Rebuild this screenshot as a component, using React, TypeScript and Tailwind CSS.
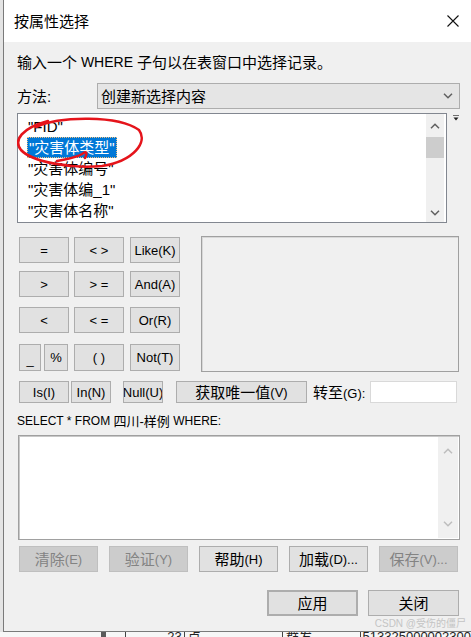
import React from "react";

// 按属性选择 对话框
const font = "font-['Liberation_Sans','Noto_Sans_CJK_SC',sans-serif]";

function Btn({
  className = "",
  children,
  disabled = false,
}: {
  className?: string;
  children: React.ReactNode;
  disabled?: boolean;
}) {
  return (
    <div
      className={`flex shrink-0 items-center justify-center overflow-hidden whitespace-nowrap border leading-none ${
        disabled ? "border-[#bfbfbf] bg-[#cccccc] text-[#838383]" : "border-[#adadad] bg-[#e1e1e1] text-black"
      } ${className}`}
    >
      {children}
    </div>
  );
}

function Chevron({ up = false, color = "#606060" }: { up?: boolean; color?: string }) {
  return (
    <svg width="10" height="6" viewBox="0 0 10 6" fill="none" stroke={color} strokeWidth="1.5">
      {up ? <path d="M1 5.2 5 1.2 9 5.2" /> : <path d="M1 0.8 5 4.8 9 0.8" />}
    </svg>
  );
}

const fields = ['"FID"', '"灾害体类型"', '"灾害体编号"', '"灾害体编_1"', '"灾害体名称"'];

export default function App() {
  return (
    <div className={`relative flex h-[637px] w-[471px] flex-col overflow-hidden bg-[#f0f0f0] ${font}`}>
      <div className="flex h-[632px]">
        <div className="w-[3px] bg-[#e4e4e4]" />
        {/* 窗口 */}
        <div className="flex flex-1 flex-col border-b border-l border-[#7a7a7a]">
          <div className="flex h-[42px] items-center justify-between bg-white pl-[10px] pr-[12px]">
            <span className="text-[15px] leading-none text-black">按属性选择</span>
            <svg width="12" height="12" viewBox="0 0 12 12" stroke="#111" strokeWidth="1.1">
              <path d="M0.5 0.5 11.5 11.5M11.5 0.5 0.5 11.5" />
            </svg>
          </div>

          <div className="flex flex-1 flex-col bg-[#f0f0f0] pl-[13px] pr-[11px] text-black">
            <div className="mt-[10px] flex h-[20px] items-center whitespace-nowrap text-[15px] leading-none">
              输入一个<span className="text-[14px]">&nbsp;WHERE&nbsp;</span>子句以在表窗口中选择记录。
            </div>

            <div className="mt-[11px] flex h-[26px] items-center">
              <span className="w-[80px] text-[15px] leading-none">方法:</span>
              <div className="flex h-[26px] w-[363px] items-center justify-between border border-[#adadad] bg-[#e5e5e5] pl-[3px] pr-[6px]">
                <span className="text-[15px] leading-none">创建新选择内容</span>
                <Chevron />
              </div>
            </div>

            {/* 字段列表 */}
            <div className="mt-[4px] flex h-[110px] items-start">
              <div className="relative flex h-[110px] w-[430px] border border-[#828790] bg-white pr-[2px]">
                <div className="flex flex-1 flex-col pl-[9px] pt-[2px]">
                  {fields.map((f, i) => (
                    <div key={f} className="flex h-[21px] items-center">
                      <span
                        className={`flex h-[21px] items-center whitespace-nowrap px-[1px] text-[15px] leading-none ${
                          i === 1 ? "border border-dotted border-[#f0c080] bg-[#0078d7] text-white" : "text-black"
                        }`}
                      >
                        {f}
                      </span>
                    </div>
                  ))}
                </div>
                <div className="flex w-[18px] flex-col bg-[#f0f0f0]">
                  <div className="flex h-[23px] items-center justify-center">
                    <Chevron up />
                  </div>
                  <div className="h-[21px] bg-[#cdcdcd]" />
                  <div className="flex-1" />
                  <div className="flex h-[18px] items-center justify-center">
                    <Chevron />
                  </div>
                </div>
                {/* 红色圈注 */}
                <svg
                  className="pointer-events-none absolute left-[-1px] top-[-1px]"
                  width="160"
                  height="70"
                  viewBox="17 113 160 70"
                  fill="none"
                  stroke="#e5141b"
                  strokeWidth="2.6"
                  strokeLinecap="round"
                >
                  <path d="M36 127 C60 116 118 115 139 130 C148 142 134 161 102 166 C72 169 32 162 21 150 C13 140 22 128 48 121" />
                  <path d="M57 161 C66 159 76 158 82 154 C86 151 88 152 85 158" />
                </svg>
              </div>
              <div className="ml-[6px] mt-[2px] flex flex-col items-center">
                <div className="h-[1px] w-[6px] bg-[#707070]" />
                <svg width="6" height="4" viewBox="0 0 6 4" className="mt-[1px]">
                  <path d="M0.5 0.5 5.5 0.5 3 3.5Z" fill="#202020" />
                </svg>
              </div>
            </div>

            {/* 运算符 + 值 */}
            <div className="mt-[13px] flex h-[136px]">
              <div className="ml-[2px] flex w-[161px] flex-col text-[13px]">
                <div className="mt-[1px] flex h-[26px] gap-[5px]">
                  <Btn className="h-[26px] w-[50px]">=</Btn>
                  <Btn className="h-[26px] w-[50px]">&lt; &gt;</Btn>
                  <Btn className="ml-[1px] h-[26px] w-[50px]">Like(K)</Btn>
                </div>
                <div className="mt-[8px] flex h-[26px] gap-[5px]">
                  <Btn className="h-[26px] w-[50px]">&gt;</Btn>
                  <Btn className="h-[26px] w-[50px]">&gt; =</Btn>
                  <Btn className="ml-[1px] h-[26px] w-[50px]">And(A)</Btn>
                </div>
                <div className="mt-[10px] flex h-[26px] gap-[5px]">
                  <Btn className="h-[26px] w-[50px]">&lt;</Btn>
                  <Btn className="h-[26px] w-[50px]">&lt; =</Btn>
                  <Btn className="ml-[1px] h-[26px] w-[50px]">Or(R)</Btn>
                </div>
                <div className="mt-[11px] flex h-[27px]">
                  <Btn className="h-[27px] w-[22px] items-end pb-[4px]">_</Btn>
                  <Btn className="ml-[3px] h-[27px] w-[24px]">%</Btn>
                  <Btn className="ml-[6px] h-[27px] w-[50px]">( )</Btn>
                  <Btn className="ml-[6px] h-[27px] w-[50px]">Not(T)</Btn>
                </div>
              </div>
              <div className="ml-[21px] h-[136px] w-[258px] border border-[#a0a0a0] bg-[#f0f0f0] shadow-[inset_1px_1px_0_#d8d8d8]" />
            </div>

            <div className="mt-[9px] flex h-[22px] items-center">
              <Btn className="ml-[2px] h-[22px] w-[50px] text-[13px]">Is(I)</Btn>
              <Btn className="ml-[2px] h-[22px] w-[40px] text-[13px]">In(N)</Btn>
              <Btn className="ml-[12px] h-[22px] w-[40px] text-[13px]">Null(U)</Btn>
              <Btn className="ml-[13px] h-[22px] w-[131px] text-[15px]">
                获取唯一值<span className="text-[13px]">(V)</span>
              </Btn>
              <span className="ml-[6px] whitespace-nowrap text-[15px] leading-none">
                转至<span className="text-[13px]">(G):</span>
              </span>
              <div className="ml-[5px] h-[22px] w-[87px] border border-[#d9d9d9] bg-white" />
            </div>

            <div className="mt-[9px] flex h-[18px] items-center whitespace-nowrap leading-none">
              <span className="text-[12px]">SELECT * FROM&nbsp;</span>
              <span className="text-[13px]">四川-样例</span>
              <span className="text-[12px]">&nbsp;WHERE:</span>
            </div>

            {/* SQL 表达式 */}
            <div className="ml-[1px] mt-[5px] flex h-[105px] w-[442px] border border-[#a0a0a0] bg-white shadow-[inset_1px_1px_0_#c8c8c8]">
              <div className="flex-1" />
              <div className="my-[1px] mr-[1px] flex w-[20px] flex-col items-center justify-between bg-[#f0f0f0] py-[11px]">
                <Chevron up color="#bdbdbd" />
                <Chevron color="#bdbdbd" />
              </div>
            </div>

            <div className="ml-[2px] mt-[6px] flex h-[26px] gap-[11px] text-[15px]">
              <Btn disabled className="h-[26px] w-[79px]">
                清除<span className="text-[13px]">(E)</span>
              </Btn>
              <Btn disabled className="h-[26px] w-[79px]">
                验证<span className="text-[13px]">(Y)</span>
              </Btn>
              <Btn className="h-[26px] w-[79px]">
                帮助<span className="text-[13px]">(H)</span>
              </Btn>
              <Btn className="h-[26px] w-[79px]">
                加载<span className="text-[13px]">(D)...</span>
              </Btn>
              <Btn disabled className="h-[26px] w-[79px]">
                保存<span className="text-[13px]">(V)...</span>
              </Btn>
            </div>

            <div className="mt-[18px] flex h-[26px] justify-end gap-[10px] pr-[1px] text-[15px]">
              <Btn className="h-[26px] w-[91px] border-2 border-[#0078d7]">应用</Btn>
              <Btn className="h-[26px] w-[91px]">关闭</Btn>
            </div>
          </div>
        </div>
      </div>

      {/* 窗口下方的表格 */}
      <div className="flex h-[5px] overflow-hidden bg-[#f7f7f7] text-[13px] leading-[10px] text-[#222]">
        <div className="w-[103px]" />
        <div className="w-[5px] bg-[#5a5a5a]" />
        <div className="w-[20px] border-r border-[#444]" />
        <div className="flex w-[60px] justify-end border-r border-[#444] pr-[2px]">23</div>
        <div className="w-[100px] border-r border-[#444] pl-[3px]">点</div>
        <div className="w-[79px] border-r border-[#444] pl-[3px]">群发</div>
        <div className="flex-1 whitespace-nowrap pl-[2px]">513325000002300</div>
      </div>

      <span className="absolute bottom-[8px] right-[5px] whitespace-nowrap text-[10px] leading-none text-[#c4c4c4]">
        CSDN @受伤的僵尸
      </span>
    </div>
  );
}
